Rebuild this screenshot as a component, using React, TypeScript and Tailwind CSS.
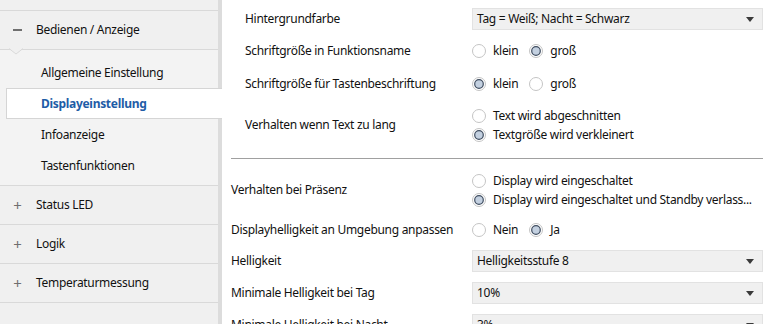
import { ReactNode } from "react";

const font = { fontFamily: '"Noto Sans", "Open Sans", sans-serif' };

function Radio({ checked }: { checked?: boolean }) {
  return (
    <svg width="14" height="14" viewBox="0 0 14 14" className="shrink-0">
      <circle cx="7" cy="7" r="6.5" fill="#ffffff" stroke="#c4c4c4" />
      {checked && <circle cx="7" cy="7" r="4.3" fill="#c3d0e0" stroke="#3f4d60" strokeWidth="1.2" />}
    </svg>
  );
}

function RadioOpt({ label, checked }: { label: string; checked?: boolean }) {
  return (
    <div className="flex items-center gap-[7px] h-[19px]">
      <Radio checked={checked} />
      <span className="whitespace-nowrap">{label}</span>
    </div>
  );
}

function Select({ value }: { value: string }) {
  return (
    <div className="h-[22px] flex items-center justify-between bg-[#f0f0f0] border border-[#e2e2e2] pl-[4px] pr-[8px]">
      <span>{value}</span>
      <svg width="8" height="5" viewBox="0 0 8 5">
        <path d="M0 0 L8 0 L4 5 Z" fill="#3a3a3a" />
      </svg>
    </div>
  );
}

function Row({ label, h, children, cols }: { label: string; h: string; children: ReactNode; cols: string }) {
  return (
    <div className={`grid items-center ${cols} ${h}`}>
      <div className="whitespace-nowrap">{label}</div>
      <div>{children}</div>
    </div>
  );
}

function NavHeader({ label, open }: { label: string; open?: boolean }) {
  return (
    <div className="h-[39px] flex items-center border-b border-[#d9d9d9] bg-[#f0f0f0] relative">
      <span className="w-[36px] flex justify-center pl-[2px] text-[#6f6f6f] text-[15px]">
        {open ? (
          <span className="block w-[9px] h-[2px] bg-[#6f6f6f] -ml-[4px]" />
        ) : (
          <span className="-ml-[3px]">+</span>
        )}
      </span>
      <span>{label}</span>
      {open && (
        <svg width="14" height="7" viewBox="0 0 14 7" className="absolute left-[9px] -bottom-[6px]">
          <path d="M0 0.5 L7 6 L14 0.5" fill="#f0f0f0" stroke="#d9d9d9" />
        </svg>
      )}
    </div>
  );
}

export default function App() {
  const up = "grid-cols-[227px_1fr]";
  const low = "grid-cols-[241px_1fr]";
  return (
    <div className="w-[778px] h-[324px] overflow-hidden flex bg-white text-[12px] tracking-[-0.3px] text-[#111]" style={font}>
      <div className="w-[222px] shrink-0 bg-[#f0f0f0] border-r-4 border-[#dcdcdc] flex flex-col">
        <div className="h-[11px] border-b border-[#d9d9d9]" />
        <NavHeader label="Bedienen / Anzeige" open />
        <div className="bg-[#f3f3f3] pt-[7px] pb-[4px] border-b border-[#d9d9d9]">
          <div className="h-[31px] flex items-center pl-[41px]">Allgemeine Einstellung</div>
          <div className="h-[31px] flex items-center ml-[6px] -mr-[4px] pl-[34px] bg-white border border-r-0 border-[#d5d5d5] text-[#1e5ca6] font-bold">
            Displayeinstellung
          </div>
          <div className="h-[31px] flex items-center pl-[41px]">Infoanzeige</div>
          <div className="h-[31px] flex items-center pl-[41px]">Tastenfunktionen</div>
        </div>
        <NavHeader label="Status LED" />
        <NavHeader label="Logik" />
        <NavHeader label="Temperaturmessung" />
      </div>

      <div className="flex-1 pl-[9px] pr-[15px]">
        <div className="pl-[14px] pt-[4px]">
          <Row label="Hintergrundfarbe" h="h-[30px]" cols={up}>
            <Select value="Tag = Weiß; Nacht = Schwarz" />
          </Row>
          <Row label="Schriftgröße in Funktionsname" h="h-[33px]" cols={up}>
            <div className="flex gap-[11px]">
              <RadioOpt label="klein" />
              <RadioOpt label="groß" checked />
            </div>
          </Row>
          <Row label="Schriftgröße für Tastenbeschriftung" h="h-[33px]" cols={up}>
            <div className="flex gap-[11px]">
              <RadioOpt label="klein" checked />
              <RadioOpt label="groß" />
            </div>
          </Row>
          <Row label="Verhalten wenn Text zu lang" h="h-[50px]" cols={up}>
            <div className="flex flex-col">
              <RadioOpt label="Text wird abgeschnitten" />
              <RadioOpt label="Textgröße wird verkleinert" checked />
            </div>
          </Row>
        </div>
        <div className="mt-[8px] h-px bg-[#a0a0a0]" />
        <div className="pt-[6px]">
          <Row label="Verhalten bei Präsenz" h="h-[50px]" cols={low}>
            <div className="flex flex-col">
              <RadioOpt label="Display wird eingeschaltet" />
              <RadioOpt label="Display wird eingeschaltet und Standby verlass..." checked />
            </div>
          </Row>
          <Row label="Displayhelligkeit an Umgebung anpassen" h="h-[30px]" cols={low}>
            <div className="flex gap-[11px]">
              <RadioOpt label="Nein" />
              <RadioOpt label="Ja" checked />
            </div>
          </Row>
          <Row label="Helligkeit" h="h-[32px]" cols={low}>
            <Select value="Helligkeitsstufe 8" />
          </Row>
          <Row label="Minimale Helligkeit bei Tag" h="h-[32px]" cols={low}>
            <Select value="10%" />
          </Row>
          <Row label="Minimale Helligkeit bei Nacht" h="h-[32px]" cols={low}>
            <Select value="3%" />
          </Row>
        </div>
      </div>
    </div>
  );
}
